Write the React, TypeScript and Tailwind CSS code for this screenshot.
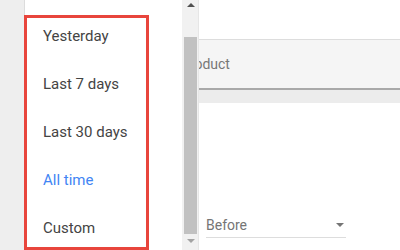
import { memo } from "react";

const items = ["Yesterday", "Last 7 days", "Last 30 days", "All time", "Custom"];

const App = memo(function App() {
    return (
        <div className="relative w-[400px] h-[250px] flex overflow-hidden bg-white font-['Roboto',sans-serif]">
            {/* left gray strip */}
            <div className="w-[25px] h-full bg-[#eeeeee] border-r border-[#dcdcdc]" />

            {/* menu panel */}
            <div className="w-[157px] h-full bg-white pt-[12px]">
                {items.map(label => (
                    <div
                        key={label}
                        className={`h-[48px] pl-[18px] flex items-center text-[15px] ${label === "All time" ? "text-[#4285f4]" : "text-[#444444]"}`}
                    >
                        {label}
                    </div>
                ))}
            </div>

            {/* scrollbar */}
            <div className="relative w-[17px] h-full bg-[#f1f1f1] border-r border-[#e6e6e6]">
                <div className="absolute left-[5px] top-[3px] w-0 h-0 border-x-[4px] border-x-transparent border-b-[4px] border-b-[#505050]" />
                <div className="absolute left-[2px] top-[37px] w-[13px] h-[197px] bg-[#c1c1c1]" />
                <div className="absolute left-[5px] top-[239px] w-0 h-0 border-x-[4px] border-x-transparent border-t-[4px] border-t-[#a3a3a3]" />
            </div>

            {/* right content */}
            <div className="flex-1 h-full flex flex-col overflow-hidden">
                <div className="h-[39px]" />
                <div className="h-[51px] bg-[#f5f5f5] border-t border-[#dddddd] border-b-2 border-b-[#a9a9a9] flex items-center">
                    <span className="ml-[-18px] text-[14px] text-[#777777] whitespace-nowrap">Product</span>
                </div>
                <div className="h-[13px] bg-[#ececec]" />
                <div className="flex-1 pl-[7px] pt-[112px]">
                    <div className="w-[140px] h-[23px] flex items-center justify-between border-b border-[#dddddd] pb-[2px]">
                        <span className="text-[14px] text-[#757575]">Before</span>
                        <div className="mr-[2px] w-0 h-0 border-x-[4px] border-x-transparent border-t-[4px] border-t-[#757575]" />
                    </div>
                </div>
            </div>

            {/* highlight overlay */}
            <div className="absolute left-[24px] top-[15px] w-[125px] h-[235px] border-[3px] border-[#e8453c]" />
        </div>
    );
});

export default App;
